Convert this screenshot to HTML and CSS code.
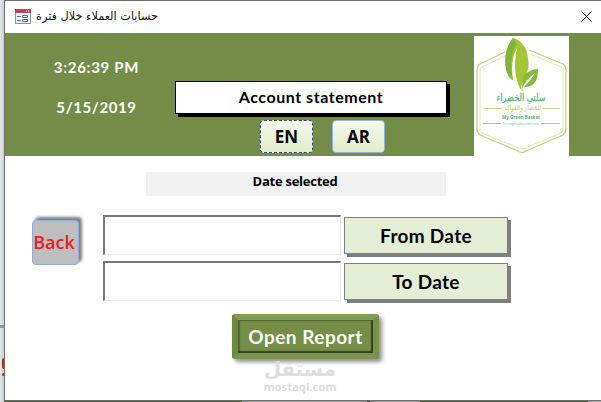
FILE: index.html
```html
<!DOCTYPE html>
<html lang="en">
<head>
    <meta charset="UTF-8">
    <meta name="viewport" content="width=device-width, initial-scale=1.0">
    <title>Account statement</title>
    <link rel="stylesheet" href="styles.css">
</head>
<body>
    <div class="edge">
        <span class="edge-top"></span>
        <span class="edge-mid"></span>
        <span class="edge-dot"></span>
        <span class="edge-dot small"></span>
    </div>

    <div class="window">
        <!-- Title bar -->
        <div class="titlebar">
            <svg class="form-icon" width="16" height="15" viewBox="0 0 16 15">
                <rect x="0.5" y="0.5" width="15" height="14" fill="#f4f7fa" stroke="#8295aa"/>
                <rect x="0" y="0" width="16" height="4" fill="#b5485c"/>
                <path d="M11 2h1M13 2h1" stroke="#fff"/>
                <path d="M2 7.5h4M2 11.5h4" stroke="#5c6c7c"/>
                <path d="M7.5 6.5h5v2h-5zM7.5 10.5h5v2h-5z" fill="#fff" stroke="#5c6c7c"/>
            </svg>
            <span class="title" dir="rtl">حسابات العملاء خلال فترة</span>
            <svg class="close" width="11" height="11" viewBox="0 0 11 11">
                <path d="M0.5 0.5l10 10M10.5 0.5l-10 10" stroke="#111" fill="none"/>
            </svg>
        </div>

        <!-- Header -->
        <div class="header">
            <div class="clock">
                <span class="time">3:26:39 PM</span>
                <span class="date">5/15/2019</span>
            </div>
            <div class="heading">
                <h1 class="form-title">Account statement</h1>
                <div class="languages">
                    <button class="btn-lang focused">EN</button>
                    <button class="btn-lang">AR</button>
                </div>
            </div>
            <svg class="logo" width="95" height="120" viewBox="0 0 95 120">
                <rect width="95" height="120" fill="#fff"/>
                <path d="M31 16L6 28Q3 30 3 34V93Q3 97 6 99L44 115Q48 118 52 115L89 99Q92 97 92 93V34Q92 30 89 28L55 14" fill="none" stroke="#bed475" stroke-width="1.2"/>
                <path d="M31 20L8 31Q6 32 6 35V92Q6 95 8 97L45 112Q48 114 51 112L87 97Q89 95 89 92V35Q89 32 87 31L56 18" fill="none" stroke="#dceab5" stroke-width="1"/>
                <path d="M39 2C31 12 29 27 34 39C36 43 38 44 39 44C37 32 38 20 43 12C40 26 40 42 47 54C47 43 57 38 54 22C53 11 47 4 39 2Z" fill="#a4c634"/>
                <path d="M39 2C31 12 29 27 34 39L39 44C36 31 37 16 43 8Z" fill="#82b43a"/>
                <path d="M64 33C53 34 46 40 49 51C52 44 57 40 61 37C58 42 54 47 50 51C61 51 64 44 64 33Z" fill="#86b83b"/>
                <path d="M48 55C48 48 50 44 53 41" fill="none" stroke="#9bc03b"/>
                <text class="logo-name" x="47" y="65" textLength="49" lengthAdjust="spacingAndGlyphs">سلتي الخضراء</text>
                <text class="logo-sub" x="48.500" y="74" textLength="37" lengthAdjust="spacingAndGlyphs">للخضار والفواكه</text>
                <text class="logo-en" x="47" y="83" textLength="38" lengthAdjust="spacingAndGlyphs">My Green Basket</text>
                <text class="logo-tag" x="47" y="88.500" textLength="36" lengthAdjust="spacingAndGlyphs">For vegetables and fruits</text>
                <path d="M10 72.500H28M69 72.500H86" stroke="#c4d889"/>
                <path d="M9 87.500H27M67 87.500H86" stroke="#9dcd9a"/>
            </svg>
        </div>

        <!-- Form -->
        <div class="content">
            <div class="selected">Date selected</div>
            <div class="form">
                <button class="btn-back">Back</button>
                <div class="fields">
                    <input type="text" class="field">
                    <button class="btn-date">From Date</button>
                    <input type="text" class="field">
                    <button class="btn-date">To Date</button>
                </div>
            </div>
            <button class="btn-report">Open Report</button>
            <svg class="watermark" width="78" height="38" viewBox="0 0 78 38">
                <text class="mark-ar" x="39" y="17" textLength="72" lengthAdjust="spacingAndGlyphs">مستقل</text>
                <text class="mark-en" x="39" y="32" textLength="73" lengthAdjust="spacingAndGlyphs">mostaql.com</text>
            </svg>
        </div>
    </div>
</body>
</html>
```
FILE: styles.css
```css
* {
    box-sizing: border-box;
    margin: 0;
    padding: 0;
}

body {
    display: flex;
    width: 601px;
    height: 402px;
    overflow: hidden;
    font-family: Lato, "Liberation Sans", sans-serif;
    background: linear-gradient(to right, #4d5738 0 232px, #4d5a32 232px 242px, #999 242px 367px, #333 367px 370px, #999 370px 420px, #4d5738 420px 588px, #aaa 588px);
}

/* Strip of the form behind the window */
.edge {
    display: flex;
    flex-direction: column;
    width: 4px;
    background: linear-gradient(to right, #e5e7e8, #c9ccce);
}

.edge-top {
    height: 325px;
}

.edge-mid {
    height: 3px;
    margin-bottom: 30px;
    background-color: #969999;
}

.edge-dot {
    width: 2px;
    height: 11px;
    margin-left: 2px;
    border-radius: 2px 0 0 2px;
    background-color: #aa3c13;
}

.edge-dot.small {
    height: 3px;
    margin-top: 4px;
}

.window {
    width: 597px;
    height: 401px;
    border: 1px solid #707070;
    border-top-color: #706c70;
    border-right: none;
    background-color: #fff;
}

.titlebar {
    display: flex;
    align-items: center;
    height: 32px;
    padding: 0 9px 2px 10px;
}

.title {
    margin-left: 5px;
    padding-top: 1px;
    font-family: "DejaVu Sans", sans-serif;
    font-size: 11.3px;
    color: #111;
    white-space: nowrap;
}

.close {
    margin-left: auto;
}

.header {
    display: flex;
    height: 123px;
    background-color: #758c48;
}

.clock {
    display: flex;
    flex-direction: column;
    gap: 20px;
    width: 170px;
    padding: 24px 0 0 13px;
    text-align: center;
    font-size: 15px;
    font-weight: bold;
    line-height: 20px;
    color: #fff;
}

.time {
    letter-spacing: 0.7px;
}

.date {
    letter-spacing: 0.6px;
}

.heading {
    width: 272px;
    padding-top: 48px;
}

.form-title {
    height: 33px;
    border: 1px solid #000;
    background-color: #fff;
    box-shadow: 3px 3px 0 #000;
    text-align: center;
    font-size: 16px;
    letter-spacing: 0.55px;
    line-height: 30px;
}

.languages {
    display: flex;
    gap: 19px;
    padding: 6px 0 0 85px;
}

.btn-lang {
    width: 53px;
    height: 33px;
    border: 1px solid #94b3dc;
    border-radius: 4px;
    background: linear-gradient(#f4f8ed, #e1edca);
    font-family: "Open Sans", sans-serif;
    font-size: 17px;
    font-weight: bold;
    color: #000;
}

.btn-lang.focused {
    border: 1px dashed #354869;
}

.logo {
    margin: 3px 0 0 27px;
}

.logo text {
    text-anchor: middle;
}

.logo-name {
    font: 10px "DejaVu Sans", sans-serif;
    fill: #58b780;
    stroke: #58b780;
    stroke-width: 0.3px;
}

.logo-sub {
    font: 7px "DejaVu Sans", sans-serif;
    fill: #b5ce59;
}

.logo-en {
    font: bold 5.5px "Open Sans", sans-serif;
    fill: #4eb36d;
}

.logo-tag {
    font: 3.5px "Open Sans", sans-serif;
    fill: #73bd87;
}

.content {
    padding: 16px 0 0 27px;
}

.selected {
    width: 300px;
    height: 24px;
    margin-left: 114px;
    padding-right: 2px;
    background-color: #f1f1f1;
    text-align: center;
    font-family: "Open Sans", sans-serif;
    font-size: 13px;
    font-weight: bold;
    letter-spacing: -0.25px;
    line-height: 19px;
}

.form {
    display: flex;
    gap: 24px;
    margin-top: 19px;
}

.btn-back {
    width: 47px;
    height: 45px;
    margin-top: 5px;
    border: 1px solid #8caeda;
    border-radius: 4px;
    background-color: #bebebe;
    box-shadow: 3px -3px 3px rgba(0, 0, 0, 0.5);
    font-family: "Open Sans", sans-serif;
    font-size: 18px;
    font-weight: 600;
    color: #ed1c24;
    padding: 0 3px 1px 0;
}

.fields {
    display: grid;
    grid-template-columns: 238px 164px;
    gap: 6px 3px;
}

.field {
    width: 238px;
    height: 40px;
    border: 2px solid;
    border-color: #777 #eee #eee #777;
    border-right-width: 1px;
    border-bottom-width: 1px;
    background-color: #fff;
    padding: 0 4px;
}

.btn-date {
    height: 37px;
    margin-top: 2px;
    border: 1px solid #7f7f7f;
    background-color: #e4edd6;
    box-shadow: 3px 3px 0 #7f7f7f;
    font-family: Lato, sans-serif;
    font-size: 19px;
    font-weight: bold;
    letter-spacing: 0.3px;
    color: #000;
}

.btn-report {
    display: block;
    width: 147px;
    height: 45px;
    margin: 13px 0 0 200px;
    border: 6px solid;
    border-color: #819f4e #77914a #7b964b #6e8743;
    border-radius: 3px;
    background-color: #758d47;
    box-shadow: 3px 3px 4px rgba(0, 0, 0, 0.45), inset -2px -2px 1px #36431f, inset 2px 1px 1px #52652f;
    font-family: Lato, sans-serif;
    font-size: 19px;
    font-weight: bold;
    letter-spacing: 0.5px;
    color: #fff;
    white-space: nowrap;
}

.watermark {
    display: block;
    margin: 0 0 0 229px;
}

.watermark text {
    text-anchor: middle;
    fill: #ddd;
}

.mark-ar {
    font: bold 20px "DejaVu Sans", sans-serif;
}

.mark-en {
    font: bold 11px "Open Sans", sans-serif;
}
```
